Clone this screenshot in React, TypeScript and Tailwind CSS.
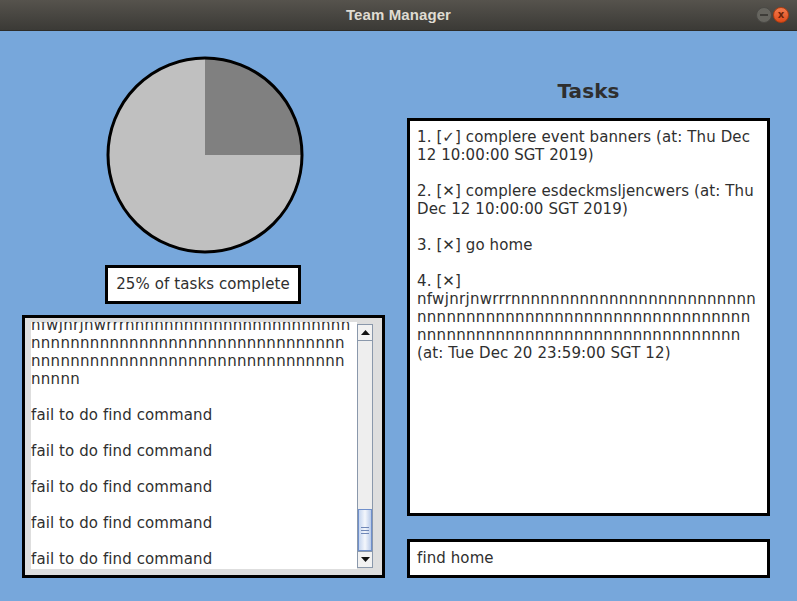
import React from "react";

type Line = { text: string; ns?: boolean };

const taskLines: Line[][] = [
  [{ text: "1. [\u2713] complere event banners (at: Thu Dec" }, { text: "12 10:00:00 SGT 2019)" }],
  [{ text: "2. [\u2715] complere esdeckmsljencwers (at: Thu" }, { text: "Dec 12 10:00:00 SGT 2019)" }],
  [{ text: "3. [\u2715] go home" }],
  [
    { text: "4. [\u2715]" },
    { text: "nfwjnrjnwrrr" + "n".repeat(25), ns: true },
    { text: "n".repeat(34), ns: true },
    { text: "n".repeat(33), ns: true },
    { text: "(at: Tue Dec 20 23:59:00 SGT 12)" },
  ],
];

const logLines: Line[] = [
  { text: "nfwjnrjnwrrr" + "n".repeat(23), ns: true },
  { text: "n".repeat(32), ns: true },
  { text: "n".repeat(32), ns: true },
  { text: "nnnnn", ns: true },
  { text: "" },
  { text: "fail to do find command" },
  { text: "" },
  { text: "fail to do find command" },
  { text: "" },
  { text: "fail to do find command" },
  { text: "" },
  { text: "fail to do find command" },
  { text: "" },
  { text: "fail to do find command" },
];

function TitleBar() {
  return (
    <div className="relative h-[31px] flex items-center justify-center bg-gradient-to-b from-[#56534d] to-[#3b3a36] border-b border-[#2d2c29]">
      <span className="font-['Liberation_Sans'] font-bold text-[15px] text-[#dfdbd2]">
        Team Manager
      </span>
      <div className="absolute right-[8px] top-[7px] flex gap-[1px]">
        <div className="w-[16px] h-[16px] rounded-full bg-[#66655f] border border-[#4a4945] flex items-center justify-center">
          <div className="w-[8px] h-[2px] bg-[#3e3d39]" />
        </div>
        <div className="w-[16px] h-[16px] rounded-full bg-gradient-to-b from-[#f37a4c] to-[#de4a17] border border-[#b13d10] flex items-center justify-center text-[10px] leading-none text-[#6a240a] font-bold">
          x
        </div>
      </div>
    </div>
  );
}

function Pie() {
  return (
    <svg width="198" height="198" viewBox="0 0 198 198">
      <circle cx="99" cy="99" r="97" fill="#c0c0c0" />
      <path d="M99 99 L99 2 A97 97 0 0 1 196 99 Z" fill="#808080" />
      <circle cx="99" cy="99" r="97" fill="none" stroke="#000" strokeWidth="3" />
    </svg>
  );
}

function ScrollBar() {
  return (
    <div className="w-[16px] flex flex-col border border-[#8a98ab] bg-[#eeeeee] mt-[2px] mb-[1px]">
      <div className="h-[16px] flex items-center justify-center border-b border-[#8a98ab] bg-[#f2f2f2]">
        <svg width="9" height="5" viewBox="0 0 9 5">
          <path d="M0 5 L4.5 0 L9 5 Z" fill="#111" />
        </svg>
      </div>
      <div className="flex-1" />
      <div className="h-[42px] border border-[#6f8fcb] bg-gradient-to-r from-[#c5d5ef] via-[#f4f7fc] to-[#b9cbe9] flex flex-col items-center justify-center gap-[2px]">
        <div className="w-[8px] h-[1px] bg-[#7088b8]" />
        <div className="w-[8px] h-[1px] bg-[#7088b8]" />
        <div className="w-[8px] h-[1px] bg-[#7088b8]" />
      </div>
      <div className="h-[16px] flex items-center justify-center border-t border-[#8a98ab] bg-[#f2f2f2]">
        <svg width="9" height="5" viewBox="0 0 9 5">
          <path d="M0 0 L4.5 5 L9 0 Z" fill="#111" />
        </svg>
      </div>
    </div>
  );
}

function TextLine({ line }: { line: Line }) {
  // JavaFX rounds glyph advances, the n-runs need a bit of extra spacing
  return (
    <div className={line.ns ? "h-[18px] tracking-[0.3px]" : "h-[18px]"}>{line.text}</div>
  );
}

export default function App() {
  return (
    <div className="w-[797px] h-[601px] flex flex-col font-['DejaVu_Sans',sans-serif] text-[#2f2f2f] tracking-[0.1px]">
      <TitleBar />
      <div className="flex-1 bg-[#77a7db] flex px-[22px] pb-[23px] gap-[22px]">
        {/* left side: chart, summary, log */}
        <div className="w-[363px] flex flex-col pt-[25px]">
          <div className="ml-[84px]">
            <Pie />
          </div>
          <div className="ml-[83px] mt-[11px] w-[196px] h-[39px] bg-white border-[3px] border-black flex items-center justify-center text-[15px]">
            25% of tasks complete
          </div>
          <div className="mt-[11px] flex-1 border-[3px] border-black bg-[#dedede] pl-[6px] pr-[9px] pt-[4px] pb-[6px] flex">
            <div className="flex-1 bg-white overflow-hidden">
              <div className="-mt-[6px] text-[15px] leading-[18px] whitespace-nowrap">
                {logLines.map((l, i) => (
                  <TextLine key={i} line={l} />
                ))}
              </div>
            </div>
            <ScrollBar />
          </div>
        </div>

        {/* right side: tasks */}
        <div className="w-[363px] flex flex-col">
          <div className="pt-[48px] h-[87px] text-center text-[20px] leading-[24px] font-bold">
            Tasks
          </div>
          <div className="h-[398px] bg-white border-[3px] border-black px-[7px] pt-[7px] text-[15px] leading-[18px] whitespace-nowrap overflow-hidden">
            {taskLines.map((t, i) => (
              <div key={i} className="mb-[18px]">
                {t.map((l, j) => (
                  <TextLine key={j} line={l} />
                ))}
              </div>
            ))}
          </div>
          <div className="mt-[23px] h-[39px] bg-white border-[3px] border-black px-[7px] flex items-center text-[15px]">
            find home
          </div>
        </div>
      </div>
    </div>
  );
}
